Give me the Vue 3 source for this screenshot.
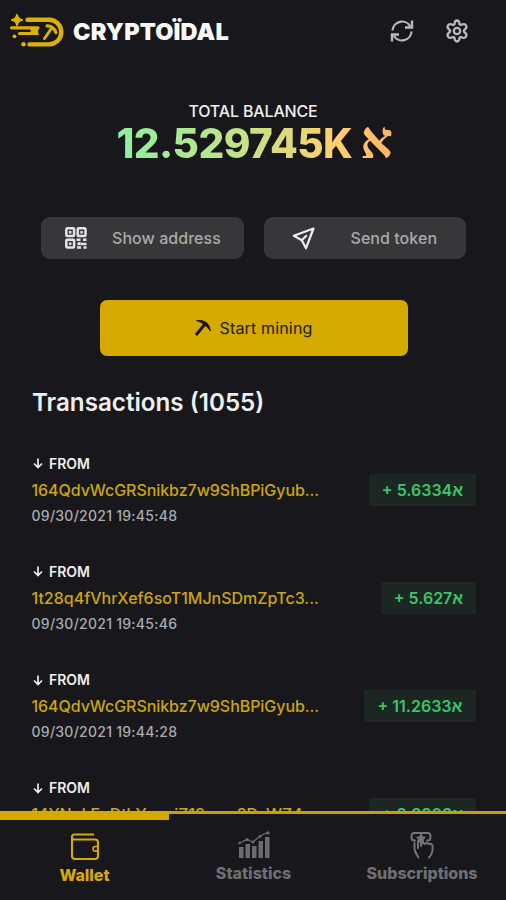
<script setup>
const transactions = [
  { address: '164QdvWcGRSnikbz7w9ShBPiGyub...', date: '09/30/2021 19:45:48', amount: '5.6334', cls: 'a' },
  { address: '1t28q4fVhrXef6soT1MJnSDmZpTc3...', date: '09/30/2021 19:45:46', amount: '5.627', cls: 'b' },
  { address: '164QdvWcGRSnikbz7w9ShBPiGyub...', date: '09/30/2021 19:44:28', amount: '11.2633', cls: 'c' },
  { address: '14YNqLEoDtkYqguiZ18psw2DsWZ4...', date: '09/30/2021 19:43:52', amount: '2.8203', cls: 'd' },
]
</script>

<template>
  <div class="app">
    <header class="top">
      <svg class="logo" width="55" height="35" viewBox="0 0 55 35" fill="none" stroke="#dcb00a" stroke-linecap="round">
        <path d="M8 1 Q8.700 5.300 13 6 Q8.700 6.700 8 11 Q7.300 6.700 3 6 Q7.300 5.300 8 1Z" fill="#dcb00a" stroke-width="2" stroke-linejoin="round" />
        <path d="M18.500 5.800H40a12.300 12.300 0 0 1 0 24.600H20.500" stroke-width="4.400" />
        <path d="M2.500 13.800H29" stroke-width="3.200" />
        <path d="M10.500 19.500H27" stroke-width="3.200" />
        <path d="M20 13h10.500Q28 17 30 21H20Q23.500 17 20 13z" fill="#dcb00a" stroke="none" />
        <circle cx="5.500" cy="22.300" r="1.900" fill="#dcb00a" stroke="none" />
        <circle cx="14.500" cy="30.300" r="2.300" fill="#dcb00a" stroke="none" />
        <path d="M35.500 24.500L42 15" stroke-width="3" />
        <path d="M38 11.800Q44 11.500 47 18.500" stroke-width="3.200" />
      </svg>
      <span class="brand">CRYPTOÏDAL</span>
      <svg class="refresh" width="24" height="24" viewBox="0 0 24 24" fill="none" stroke="#b9b9ba" stroke-width="2.200">
        <path d="M2.500 11.500A9.500 9.500 0 0 1 20.300 7.500M21.500 12.500A9.500 9.500 0 0 1 3.700 16.500" />
        <path d="M22 1.500V8.500H15M2 22.500V15.500H9" stroke-width="2.400" />
      </svg>
      <svg class="gear" width="24" height="24" viewBox="0 0 24 24" fill="none" stroke="#b9b9ba" stroke-width="2.300" stroke-linejoin="round">
        <path d="M12 1.500Q14.300 1.500 14.500 5.200L15.800 6Q19.800 4.200 21.100 6.500Q22.400 8.900 19 11.200V12.800Q22.400 15.100 21.100 17.500Q19.800 19.800 15.800 18L14.500 18.800Q14.300 22.500 12 22.500Q9.700 22.500 9.500 18.800L8.200 18Q4.200 19.800 2.900 17.500Q1.600 15.100 5 12.800V11.200Q1.600 8.900 2.900 6.500Q4.200 4.200 8.200 6L9.500 5.200Q9.700 1.500 12 1.500Z" />
        <circle cx="12" cy="12" r="3.200" />
      </svg>
    </header>

    <section class="balance">
      <div class="label">TOTAL BALANCE</div>
      <div class="value"><span class="num">12.529745K</span><span class="aleph">א</span></div>
    </section>

    <div class="actions">
      <button class="act show">
        <svg width="22" height="22" viewBox="0 0 22 22" fill="none" stroke="#e4e4e4" stroke-width="2.500">
          <rect x="1.300" y="1.300" width="7.800" height="7.800" rx="1" /><rect x="12.700" y="1.300" width="7.800" height="7.800" rx="1" />
          <rect x="1.300" y="12.700" width="7.800" height="7.800" rx="1" />
          <path d="M5.200 4v2.500M16.600 4v2.500M5.200 15.400v2.500" />
          <path d="M11.500 12.700h4M18 12.700h3.500M12.500 17h2v-2M16 17h5.500M12 20.600h4M18.500 20.600h3" />
        </svg>
        <span>Show address</span>
      </button>
      <button class="act send">
        <svg width="23" height="23" viewBox="0 0 23 23" fill="none" stroke="#f0f0f0" stroke-width="2.200" stroke-linejoin="round">
          <path d="M21.500 1.500L1.800 8.800l8 4.400 4.200 8zM9.800 13.200l5-5" />
        </svg>
        <span>Send token</span>
      </button>
    </div>

    <button class="mine">
      <svg width="18" height="18" viewBox="0 0 18 18" fill="none" stroke="#171407">
        <path d="M2 16L11 5" stroke-width="2.800" />
        <path d="M2.500 1.600Q8 .6 12 3.200Q15.800 6 16.500 12Q14 8.500 10.500 5.800Q7 2.800 2.500 1.600Z" fill="#171407" stroke-width=".8" />
      </svg>
      <span>Start mining</span>
    </button>

    <main class="list">
      <h1><span>Transactions (1055)</span></h1>
      <article v-for="(t, i) in transactions" :key="i" class="tx">
        <div class="info">
          <div class="from">
            <svg width="10" height="11" viewBox="0 0 10 11" fill="none" stroke="#ededed" stroke-width="1.700"><path d="M5 .5v9M1 5.500l4 4 4-4" /></svg>
            <span>FROM</span>
          </div>
          <div class="address" :class="'addr-' + t.cls">{{ t.address }}</div>
          <div class="date">{{ t.date }}</div>
        </div>
        <div class="amount" :class="'amt-' + t.cls"><span>+ {{ t.amount }}</span><bdi>א</bdi></div>
      </article>
    </main>

    <nav class="tabs">
      <div class="indicator"></div>
      <a class="tab active">
        <svg width="30" height="28" viewBox="0 0 30 28" fill="none" stroke="#d5aa08" stroke-width="2.100">
          <path d="M24 1.500H4.500Q2 1.500 2 4V23q0 3 3 3h20q3 0 3-3V9.500q0-3-3-3H4.500Q2 6.500 2 4" />
          <path d="M28 13.500h-3q-2 0-2 2.300t2 2.300H28" stroke-width="1.600" />
        </svg>
        <span>Wallet</span>
      </a>
      <a class="tab">
        <svg width="34" height="28" viewBox="0 0 34 28" fill="#6b6b6d" stroke="none">
          <path d="M2 16h4.500v11H2zM8.500 13H13v14H8.500zM15 15h4.500v12H15zM21.500 10H26v17h-4.500zM28 6h4.500v21H28z" />
          <path d="M2.500 12L10 8.500l6 2.500 7-6 7.500-3.500" fill="none" stroke="#6b6b6d" stroke-width="1.300" />
          <circle cx="2.500" cy="12" r="1.300" /><circle cx="10" cy="8.500" r="1.500" /><circle cx="16" cy="11" r="1.500" /><circle cx="23" cy="5.500" r="1.500" /><circle cx="31" cy="2" r="1.700" />
        </svg>
        <span>Statistics</span>
      </a>
      <a class="tab">
        <svg width="26" height="28" viewBox="0 0 26 28" fill="none" stroke="#747476" stroke-width="2" stroke-linecap="round" stroke-linejoin="round">
          <path d="M6 9.500H5Q2.500 9.500 2.500 5.700T5 2h14q2.500 0 2.500 3.700T19 9.500h-1" />
          <path d="M12 4l1 2.200 2.500.3-1.800 1.600.4 2.400L12 9.300l-2.100 1.200.4-2.400-1.800-1.600 2.500-.3z" fill="#747476" />
          <path d="M9.500 26.500Q5 20 5.500 16V12M9 17V10M12 9v6M12 13q1.500-2 3.500 0 2-2 4 0 3-1 4 1.500Q24.500 22 20 26.500" />
        </svg>
        <span>Subscriptions</span>
      </a>
    </nav>
  </div>
</template>

<style>
body { margin: 0; background: #18181c; overflow: hidden; }
</style>

<style scoped>
.app { width: 506px; height: 900px; display: flex; flex-direction: column; overflow: hidden; background: #18181c; color: #eee; font-family: Inter, "Liberation Sans", sans-serif; white-space: nowrap; }
button { border: 0; padding: 0; font-family: inherit; }
svg { display: block; flex: none; }
.top { height: 62px; flex: none; display: flex; align-items: center; padding: 0 37px 0 9px; }
.brand { margin-left: 9px; width: 317px; font-size: 23.500px; font-weight: 900; letter-spacing: .15px; color: #f7f7f7; }
.gear { margin-left: auto; }
.balance { height: 155px; flex: none; display: flex; flex-direction: column; align-items: center; padding-top: 40px; box-sizing: border-box; }
.label { font-size: 16px; line-height: 18px; font-weight: 500; letter-spacing: -.15px; }
.value { display: flex; align-items: center; gap: 8px; height: 48px; margin-left: 3px; font-size: 40.500px; line-height: 48px; font-weight: 800; letter-spacing: -.6px; background: linear-gradient(90deg, #8ef0a0, #c9e184 50%, #ffd06b 80%, #ffb469); background-clip: text; color: transparent; }
.aleph { font-family: "Liberation Serif", serif; font-size: 51px; font-weight: 700; line-height: 42px; padding-bottom: 6px; }
.actions { display: flex; gap: 20px; padding: 0 40px 0 41px; height: 42px; flex: none; }
.act { display: flex; align-items: center; width: 203px; border-radius: 9px; background: #37373a; color: #aaaaab; font-size: 16px; font-weight: 500; letter-spacing: .05px; }
.show { padding-left: 24px; gap: 25px; }
.send { padding-left: 28px; gap: 36px; }
.mine { margin: 41px 0 0 100px; width: 308px; height: 56px; flex: none; border-radius: 7px; background: #d4a900; color: #211c08; display: flex; align-items: center; justify-content: center; gap: 8px; font-size: 16px; font-weight: 400; letter-spacing: .16px; padding-right: 2px; box-sizing: border-box; }
.list { flex: 1; min-height: 0; overflow: hidden; padding: 32px 30px 0 32px; }
h1 { margin: 0 0 33.500px; font-size: 24.200px; line-height: 30px; font-weight: 600; }
.tx { height: 108.300px; display: flex; justify-content: space-between; }
.from { display: flex; align-items: center; gap: 6px; font-size: 14px; line-height: 18px; font-weight: 600; height: 24px; margin-left: 1px; }
.address { color: #cca511; font-size: 16px; line-height: 28px; font-weight: 500; letter-spacing: -.06px; margin-left: -.5px; }
.addr-b { letter-spacing: 0; }
.date { color: #ababad; font-size: 14px; line-height: 24px; font-weight: 500; letter-spacing: .26px; margin-left: -.5px; }
.amount { display: flex; align-items: center; justify-content: center; margin-top: 22px; width: 107px; height: 32px; border-radius: 3px; background: #1c2723; color: #3cc568; font-size: 16px; font-weight: 600; }
.amt-b { width: 95px; }
.amt-c { width: 112px; }
.tabs { height: 89px; flex: none; box-sizing: border-box; border-top: 3px solid #c69f0b; position: relative; display: grid; grid-template-columns: 169px 169px 168px; }
.indicator { position: absolute; left: 0; top: -3px; width: 169px; height: 9px; background: #d4a900; }
.tab { display: flex; flex-direction: column; align-items: center; gap: 4px; padding-top: 17px; font-size: 16px; line-height: 20px; font-weight: 800; color: #6f6f71; }
.active { color: #d5aa08; padding-top: 19px; }
</style>
